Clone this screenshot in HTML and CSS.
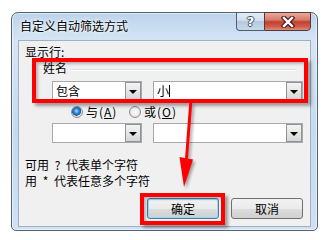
FILE: index.html
```html
<!DOCTYPE html>
<html>
<head>
<meta charset="utf-8">
<link rel="stylesheet" href="styles.css">
</head>
<body>
<div class="window">
  <div class="titlebar">
    <span class="title">自定义自动筛选方式</span>
    <div class="controls">
      <div class="btn-help">?</div>
      <div class="btn-close">
        <svg width="14" height="12" viewBox="0 0 14 12">
          <path d="M3 2 L11 10 M11 2 L3 10" stroke="#4a1c16" stroke-width="4.6" stroke-linecap="square" fill="none"/>
          <path d="M3 2 L11 10 M11 2 L3 10" stroke="#ffffff" stroke-width="2.4" stroke-linecap="square" fill="none"/>
        </svg>
      </div>
    </div>
  </div>
  <div class="client">
    <div class="label-show">显示行:</div>
    <div class="group-title"><span>姓名</span><i class="group-line"></i></div>
    <div class="row">
      <div class="combo combo-op"><span class="val">包含</span><b class="drop"><i class="tri"></i></b></div>
      <div class="combo combo-val"><span class="val">小</span><i class="caret"></i><b class="drop"><i class="tri"></i></b></div>
    </div>
    <div class="radios">
      <div class="opt opt1"><i class="radio checked"></i><span>与(<u>A</u>)</span></div>
      <div class="opt"><i class="radio"></i><span>或(<u>O</u>)</span></div>
    </div>
    <div class="row">
      <div class="combo combo-op"><span class="val"></span><b class="drop"><i class="tri"></i></b></div>
      <div class="combo combo-val"><span class="val"></span><b class="drop"><i class="tri"></i></b></div>
    </div>
    <div class="hint">可用 ? 代表单个字符<br>用 * 代表任意多个字符</div>
    <div class="buttons">
      <div class="btn btn-ok">确定</div>
      <div class="btn btn-cancel">取消</div>
    </div>
    <div class="mark mark-top"></div>
    <div class="mark mark-ok"></div>
    <svg class="arrow" width="293" height="185" viewBox="0 0 293 185">
      <line x1="171.7" y1="62" x2="167.5" y2="118" stroke="#ff0000" stroke-width="3"/>
      <polygon points="160.5,116 174,118.5 165,146" fill="#ff0000"/>
    </svg>
  </div>
</div>
</body>
</html>
```

FILE: styles.css
```css
html, body {
  margin: 0;
  padding: 0;
}
body {
  background: #ffffff;
  font-family: "Noto Sans CJK SC", "Liberation Sans", sans-serif;
  font-size: 12px;
  color: #000;
}
.window {
  box-sizing: border-box;
  margin: 12px 0 0 11px;
  width: 307px;
  height: 219px;
  border: 1px solid #56616e;
  border-radius: 7px 7px 5px 5px;
  background: linear-gradient(180deg, #bcd3eb 0, #d5e5f5 28px, #c5daef 55%, #cfe1f3 100%);
  box-shadow: inset 0 0 0 1px rgba(255,255,255,0.55);
  padding: 0 6px 3px 6px;
  display: flex;
  flex-direction: column;
}
.titlebar {
  flex: none;
  height: 27px;
  display: flex;
  justify-content: space-between;
  align-items: flex-start;
}
.title {
  margin: 6px 0 0 2px;
  line-height: 14px;
  font-size: 12px;
  text-shadow: 0 0 5px #fff, 0 0 3px #fff;
}
.controls {
  display: flex;
  margin-top: -1px;
  height: 19px;
}
.btn-help {
  box-sizing: border-box;
  width: 28px;
  height: 19px;
  border: 1px solid #4f5f72;
  border-right: none;
  border-radius: 0 0 0 4px;
  background: linear-gradient(180deg, #e4edf7 0, #cfdded 45%, #b4c8de 50%, #c9d9ea 100%);
  color: #fff;
  font-family: "DejaVu Sans", sans-serif;
  font-weight: bold;
  font-size: 13px;
  line-height: 17px;
  text-align: center;
  text-shadow: 1px 0 0 #404e5f, -1px 0 0 #404e5f, 0 1px 0 #404e5f, 0 -1px 0 #404e5f;
}
.btn-close {
  box-sizing: border-box;
  width: 47px;
  height: 19px;
  border: 1px solid #4f3a3a;
  border-radius: 0 0 4px 0;
  background: linear-gradient(180deg, #e9a99b 0, #d97c6b 40%, #c2402f 52%, #cf5d4b 80%, #e08e78 100%);
  display: flex;
  align-items: center;
  justify-content: center;
}
.client {
  position: relative;
  flex: 1;
  background: #f0f0f0;
  border: 1px solid #a1b1c3;
  display: flex;
  flex-direction: column;
}
.label-show {
  margin: 4px 0 0 6px;
  line-height: 14px;
  height: 14px;
}
.group-title {
  margin-top: 2px;
  height: 14px;
  line-height: 14px;
  display: flex;
  align-items: center;
}
.group-title span {
  margin-left: 24px;
}
.group-line {
  flex: 1;
  height: 1px;
  margin: 2px 14px 0 4px;
  background: #d5dfe5;
  box-shadow: 0 1px 0 #ffffff;
}
.row {
  margin-top: 6px;
  height: 20px;
  display: flex;
  padding-left: 33px;
  gap: 11px;
}
.radios + .row {
  margin-top: 0;
}
.combo {
  box-sizing: border-box;
  height: 20px;
  border: 1px solid #a6a9ad;
  background: #fff;
  display: flex;
  align-items: center;
  position: relative;
}
.combo-op { width: 90px; }
.combo-val { width: 150px; }
.val {
  padding-left: 3px;
  line-height: 14px;
  flex: 1;
}
.caret {
  position: absolute;
  left: 15px;
  top: 3px;
  width: 1px;
  height: 12px;
  background: #000;
}
.drop {
  box-sizing: border-box;
  width: 16px;
  height: 18px;
  border: 1px solid #8f9296;
  background: linear-gradient(180deg, #f4f4f4 0, #e6e6e6 50%, #d6d6d6 100%);
  display: flex;
  align-items: center;
  justify-content: center;
}
.tri {
  width: 0;
  height: 0;
  border-left: 4px solid transparent;
  border-right: 4px solid transparent;
  border-top: 4px solid #000;
  margin-top: 1px;
}
.radios {
  height: 22px;
  display: flex;
  align-items: center;
  padding-left: 52px;
}
.opt {
  display: flex;
  align-items: center;
  gap: 3px;
  line-height: 14px;
  letter-spacing: 1px;
}
.opt1 { width: 58px; }
.radio {
  box-sizing: border-box;
  width: 12px;
  height: 12px;
  border-radius: 50%;
  border: 1px solid #8e8f8f;
  background: radial-gradient(circle at 50% 50%, #ffffff 0, #e8e8e8 60%, #cfcfcf 100%);
}
.radio.checked {
  background: radial-gradient(circle at 45% 40%, #a9e1ff 0, #2f8ad8 30%, #1a5aa3 55%, #dedede 60%, #f4f4f4 100%);
}
.hint {
  margin: 14px 0 0 6px;
  line-height: 16px;
  word-spacing: 3px;
}
.buttons {
  margin-top: 9px;
  display: flex;
  padding-left: 128px;
  gap: 12px;
}
.btn {
  box-sizing: border-box;
  width: 72px;
  height: 21px;
  border: 1px solid #707070;
  border-radius: 3px;
  background: linear-gradient(180deg, #f2f2f2 0, #ebebeb 50%, #dddddd 51%, #cfcfcf 100%);
  text-align: center;
  line-height: 19px;
}
.btn-ok {
  border-color: #3c7fb1;
  box-shadow: inset 0 0 0 1px #9fdaf5;
}
.mark {
  position: absolute;
  box-sizing: border-box;
  border: 4px solid #ff0000;
  box-shadow: 3px 3px 3px rgba(0,0,0,0.35), inset 2px 2px 3px rgba(0,0,0,0.25);
}
.mark-top {
  left: 13px;
  top: 17px;
  width: 276px;
  height: 45px;
}
.mark-ok {
  left: 121px;
  top: 152px;
  width: 85px;
  height: 32px;
}
.arrow {
  position: absolute;
  left: 0;
  top: 0;
  filter: drop-shadow(2px 2px 1.5px rgba(0,0,0,0.35));
}
```
